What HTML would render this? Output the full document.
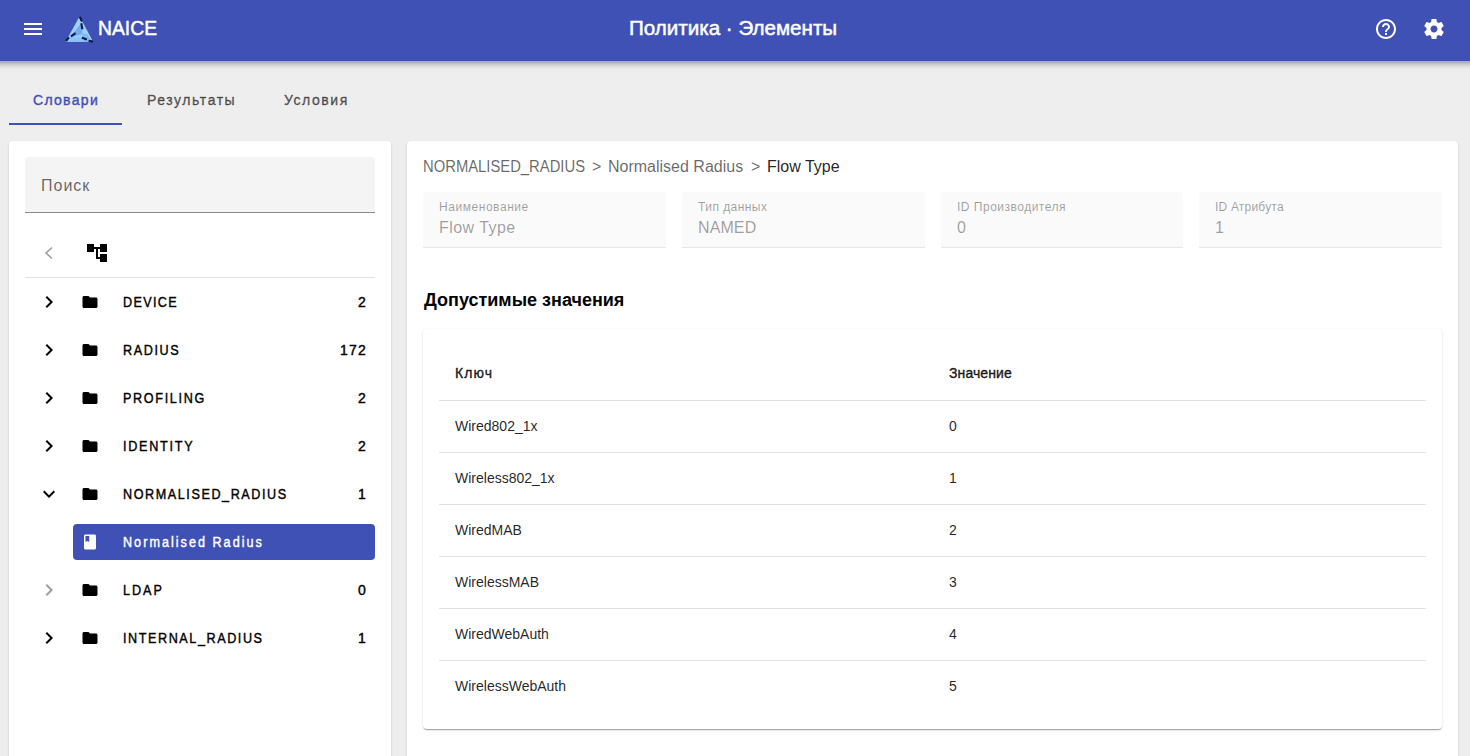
<!DOCTYPE html>
<html><head><meta charset="utf-8">
<style>
*{box-sizing:border-box;margin:0;padding:0}
html,body{width:1470px;height:756px;overflow:hidden;background:#eeeeee;font-family:"Liberation Sans",sans-serif;}
.abs{position:absolute;white-space:nowrap}
.hdr{position:absolute;left:0;top:0;width:1470px;height:61px;background:#3f51b5;z-index:5}
.hdrsh{position:absolute;left:-30px;top:0;width:1530px;height:61px;background:#3f51b5;box-shadow:0 2px 4px -1px rgba(0,0,0,.2),0 4px 5px 0 rgba(0,0,0,.14),0 1px 10px 0 rgba(0,0,0,.12);z-index:4}
.t{color:#fff;font-size:21px;font-weight:normal;-webkit-text-stroke:0.5px currentColor}
.tab{position:absolute;top:92px;font-size:14px;font-weight:normal;-webkit-text-stroke:0.4px currentColor;letter-spacing:1.3px;color:rgba(0,0,0,.6)}
.card{position:absolute;background:#fff;border-radius:4px;box-shadow:0 2px 1px -1px rgba(0,0,0,.2),0 1px 1px 0 rgba(0,0,0,.14),0 1px 3px 0 rgba(0,0,0,.12)}
.med{font-weight:normal;-webkit-text-stroke:0.4px currentColor}
.lbl{font-size:14px;font-weight:normal;-webkit-text-stroke:0.4px currentColor;color:#000;transform:scaleX(0.9);transform-origin:0 0}
.cnt{font-size:14px;font-weight:normal;-webkit-text-stroke:0.4px currentColor;color:#000;letter-spacing:1.2px}
.fld{position:absolute;top:192px;height:56px;background:#fafafa;border-radius:4px 4px 0 0;border-bottom:1px solid #e6e6e6}
.fl{font-size:12px;color:rgba(0,0,0,.38);letter-spacing:0.5px}
.fv{font-size:16px;color:rgba(0,0,0,.38)}
.bc{font-size:16px;color:rgba(0,0,0,.6)}
.hline{position:absolute;left:439px;width:987px;height:1px;background:#e0e0e0}
.cell{font-size:14px;color:rgba(0,0,0,.87)}
.th{font-size:14px;font-weight:normal;-webkit-text-stroke:0.4px currentColor;color:rgba(0,0,0,.87)}
</style></head><body>
<div class="hdrsh"></div>
<div class="hdr">
<svg class="abs" style="left:23px;top:22px" width="20" height="14" viewBox="0 0 20 14"><rect x="1" y="1" width="18" height="2" fill="#fff"/><rect x="1" y="6" width="18" height="2" fill="#fff"/><rect x="1" y="11" width="18" height="2" fill="#fff"/></svg>
<svg class="abs" style="left:62px;top:12px" width="36" height="34" viewBox="0 0 36 34">
<polygon points="17.6,4.3 31.1,29.7 3.6,29.7" fill="#9ccffb"/>
<polygon points="19.5,11 20.5,22 7,26 13,19" fill="#72abf0"/>
<polygon points="20.5,21.5 25,22 30,29.7 21,29.7 20,25" fill="#80b8f4"/>
<polygon points="9,25.5 20,25 20.5,29.7 6,29.7" fill="#8cc3f7"/>
<g stroke="#0a1a45" stroke-width="2.1" stroke-linecap="butt" fill="none">
<line x1="17.6" y1="4.6" x2="20" y2="9.5"/>
<line x1="19.3" y1="11.3" x2="20.4" y2="17.2"/>
<line x1="13.6" y1="21.2" x2="9" y2="24.4"/>
<line x1="6.9" y1="25.3" x2="4" y2="29"/>
<line x1="20" y1="25.7" x2="24.9" y2="27.6"/>
<line x1="26.6" y1="28.7" x2="31" y2="29.6"/>
</g>
</svg>
<div class="abs t" style="left:98px;top:16px;transform:scaleX(0.92);transform-origin:0 0">NAICE</div>
<div class="abs t" style="left:629px;top:16px;transform:scaleX(0.98);transform-origin:0 0">Политика · Элементы</div>
<svg class="abs" style="left:1374px;top:17px" width="24" height="24" viewBox="0 0 24 24"><path fill="#fff" d="M11 18h2v-2h-2v2zm1-16C6.48 2 2 6.48 2 12s4.48 10 10 10 10-4.48 10-10S17.52 2 12 2zm0 18c-4.41 0-8-3.59-8-8s3.59-8 8-8 8 3.59 8 8-3.59 8-8 8zm0-14c-2.21 0-4 1.790-4 4h2c0-1.1.9-2 2-2s2 .9 2 2c0 2-3 1.75-3 5h2c0-2.25 3-2.5 3-5 0-2.21-1.79-4-4-4z"/></svg>
<svg class="abs" style="left:1422px;top:17px" width="24" height="24" viewBox="0 0 24 24"><path fill="#fff" d="M19.43 12.98c.04-.32.07-.64.07-.98s-.03-.66-.07-.98l2.11-1.650c.19-.15.24-.42.12-.64l-2-3.46c-.12-.22-.39-.3-.61-.22l-2.49 1c-.52-.4-1.08-.73-1.69-.98l-.38-2.65C14.46 2.18 14.25 2 14 2h-4c-.25 0-.46.18-.49.42l-.38 2.65c-.61.25-1.17.59-1.69.98l-2.49-1c-.23-.09-.49 0-.61.22l-2 3.46c-.13.22-.07.49.12.64l2.11 1.65c-.04.32-.07.65-.07.98s.03.66.07.98l-2.11 1.65c-.19.15-.24.42-.12.64l2 3.46c.12.22.39.3.61.22l2.49-1c.52.4 1.08.73 1.69.98l.38 2.65c.03.24.24.42.49.42h4c.25 0 .46-.18.49-.42l.38-2.65c.61-.25 1.17-.59 1.690-.98l2.49 1c.23.09.49 0 .61-.22l2-3.46c.12-.22.07-.49-.12-.64l-2.11-1.65zM12 15.5c-1.93 0-3.5-1.57-3.5-3.5s1.57-3.5 3.5-3.5 3.5 1.57 3.5 3.5-1.57 3.5-3.5 3.5z"/></svg>
</div>
<div class="tab" style="left:33px;color:#3f51b5">Словари</div>
<div class="tab" style="left:147px;letter-spacing:1.55px">Результаты</div>
<div class="tab" style="left:284px;letter-spacing:1.55px">Условия</div>
<div class="abs" style="left:9px;top:123px;width:113px;height:2px;background:#3f51b5"></div>
<div class="card" style="left:9px;top:141px;width:382px;height:640px"></div>
<div class="abs" style="left:25px;top:157px;width:350px;height:56px;background:#f4f4f4;border-radius:4px 4px 0 0;border-bottom:1px solid #8a8a8a"></div>
<div class="abs" style="left:41px;top:177px;font-size:16px;letter-spacing:1px;color:rgba(0,0,0,.6)">Поиск</div>
<svg class="abs" style="left:44px;top:246px" width="10" height="14" viewBox="0 0 10 14"><path d="M8 1.5 L2 7 L8 12.5" stroke="#9e9e9e" stroke-width="1.6" fill="none"/></svg>
<svg class="abs" style="left:87px;top:244px" width="20" height="18" viewBox="0 0 20 18"><rect x="0" y="0" width="7" height="8" fill="#000"/><rect x="13" y="0" width="7" height="8" fill="#000"/><rect x="13" y="10" width="7" height="8" fill="#000"/><rect x="7" y="3" width="6" height="2" fill="#000"/><rect x="9" y="5" width="2" height="9" fill="#000"/><rect x="9" y="13" width="4" height="2" fill="#000"/></svg>
<div class="abs" style="left:25px;top:277px;width:350px;height:1px;background:#e0e0e0"></div>
<svg class="abs" style="left:37px;top:290px" width="24" height="24" viewBox="0 0 24 24"><path fill="#000" d="M10 6L8.59 7.41 13.17 12l-4.58 4.59L10 18l6-6z"/></svg>
<svg class="abs" style="left:81px;top:293px" width="18" height="18" viewBox="0 0 24 24"><path fill="#000" d="M10 4H4c-1.1 0-1.99.9-1.99 2L2 18c0 1.1.9 2 2 2h16c1.1 0 2-.9 2-2V8c0-1.1-.9-2-2-2h-8l-2-2z"/></svg>
<div class="abs lbl" style="left:123px;top:294px;letter-spacing:1.5px">DEVICE</div>
<div class="abs cnt" style="right:1103px;top:294px">2</div>
<svg class="abs" style="left:37px;top:338px" width="24" height="24" viewBox="0 0 24 24"><path fill="#000" d="M10 6L8.59 7.41 13.17 12l-4.58 4.59L10 18l6-6z"/></svg>
<svg class="abs" style="left:81px;top:341px" width="18" height="18" viewBox="0 0 24 24"><path fill="#000" d="M10 4H4c-1.1 0-1.99.9-1.99 2L2 18c0 1.1.9 2 2 2h16c1.1 0 2-.9 2-2V8c0-1.1-.9-2-2-2h-8l-2-2z"/></svg>
<div class="abs lbl" style="left:123px;top:342px;letter-spacing:1.8px">RADIUS</div>
<div class="abs cnt" style="right:1103px;top:342px">172</div>
<svg class="abs" style="left:37px;top:386px" width="24" height="24" viewBox="0 0 24 24"><path fill="#000" d="M10 6L8.59 7.41 13.17 12l-4.58 4.59L10 18l6-6z"/></svg>
<svg class="abs" style="left:81px;top:389px" width="18" height="18" viewBox="0 0 24 24"><path fill="#000" d="M10 4H4c-1.1 0-1.99.9-1.99 2L2 18c0 1.1.9 2 2 2h16c1.1 0 2-.9 2-2V8c0-1.1-.9-2-2-2h-8l-2-2z"/></svg>
<div class="abs lbl" style="left:123px;top:390px;letter-spacing:1.85px">PROFILING</div>
<div class="abs cnt" style="right:1103px;top:390px">2</div>
<svg class="abs" style="left:37px;top:434px" width="24" height="24" viewBox="0 0 24 24"><path fill="#000" d="M10 6L8.59 7.41 13.17 12l-4.58 4.59L10 18l6-6z"/></svg>
<svg class="abs" style="left:81px;top:437px" width="18" height="18" viewBox="0 0 24 24"><path fill="#000" d="M10 4H4c-1.1 0-1.99.9-1.99 2L2 18c0 1.1.9 2 2 2h16c1.1 0 2-.9 2-2V8c0-1.1-.9-2-2-2h-8l-2-2z"/></svg>
<div class="abs lbl" style="left:123px;top:438px;letter-spacing:1.95px">IDENTITY</div>
<div class="abs cnt" style="right:1103px;top:438px">2</div>
<svg class="abs" style="left:37px;top:482px" width="24" height="24" viewBox="0 0 24 24"><path fill="#000" d="M16.59 8.59L12 13.17 7.41 8.59 6 10l6 6 6-6z"/></svg>
<svg class="abs" style="left:81px;top:485px" width="18" height="18" viewBox="0 0 24 24"><path fill="#000" d="M10 4H4c-1.1 0-1.99.9-1.99 2L2 18c0 1.1.9 2 2 2h16c1.1 0 2-.9 2-2V8c0-1.1-.9-2-2-2h-8l-2-2z"/></svg>
<div class="abs lbl" style="left:123px;top:486px;letter-spacing:1.75px">NORMALISED_RADIUS</div>
<div class="abs cnt" style="right:1103px;top:486px">1</div>
<svg class="abs" style="left:37px;top:578px" width="24" height="24" viewBox="0 0 24 24"><path fill="rgba(0,0,0,.38)" d="M10 6L8.59 7.41 13.17 12l-4.58 4.59L10 18l6-6z"/></svg>
<svg class="abs" style="left:81px;top:581px" width="18" height="18" viewBox="0 0 24 24"><path fill="#000" d="M10 4H4c-1.1 0-1.99.9-1.99 2L2 18c0 1.1.9 2 2 2h16c1.1 0 2-.9 2-2V8c0-1.1-.9-2-2-2h-8l-2-2z"/></svg>
<div class="abs lbl" style="left:123px;top:582px;letter-spacing:2.2px">LDAP</div>
<div class="abs cnt" style="right:1103px;top:582px">0</div>
<svg class="abs" style="left:37px;top:626px" width="24" height="24" viewBox="0 0 24 24"><path fill="#000" d="M10 6L8.59 7.41 13.17 12l-4.58 4.59L10 18l6-6z"/></svg>
<svg class="abs" style="left:81px;top:629px" width="18" height="18" viewBox="0 0 24 24"><path fill="#000" d="M10 4H4c-1.1 0-1.99.9-1.99 2L2 18c0 1.1.9 2 2 2h16c1.1 0 2-.9 2-2V8c0-1.1-.9-2-2-2h-8l-2-2z"/></svg>
<div class="abs lbl" style="left:123px;top:630px;letter-spacing:1.75px">INTERNAL_RADIUS</div>
<div class="abs cnt" style="right:1103px;top:630px">1</div>
<div class="abs" style="left:73px;top:524px;width:302px;height:36px;background:#3f51b5;border-radius:4px"></div>
<svg class="abs" style="left:81px;top:533px" width="18" height="18" viewBox="0 0 24 24"><path fill="#fff" d="M18 2H6c-1.1 0-2 .9-2 2v16c0 1.1.9 2 2 2h12c1.1 0 2-.9 2-2V4c0-1.1-.9-2-2-2zM6 4h5v8l-2.5-1.5L6 12V4z"/></svg>
<div class="abs lbl" style="left:123px;top:534px;color:#fff;letter-spacing:2.25px">Normalised Radius</div>
<div class="card" style="left:407px;top:141px;width:1051px;height:640px"></div>
<div class="abs bc" style="left:423px;top:158px;transform:scaleX(0.925);transform-origin:0 0">NORMALISED_RADIUS</div>
<div class="abs bc" style="left:592px;top:158px">&gt;</div>
<div class="abs bc" style="left:608px;top:158px">Normalised Radius</div>
<div class="abs bc" style="left:751px;top:158px">&gt;</div>
<div class="abs bc" style="left:767px;top:158px;color:rgba(0,0,0,.87)">Flow Type</div>
<div class="fld" style="left:423px;width:243px"></div>
<div class="abs fl" style="left:439px;top:200px;letter-spacing:0.55px">Наименование</div>
<div class="abs fv" style="left:439px;top:219px;letter-spacing:0.45px">Flow Type</div>
<div class="fld" style="left:682px;width:243px"></div>
<div class="abs fl" style="left:698px;top:200px;letter-spacing:0.45px">Тип данных</div>
<div class="abs fv" style="left:698px;top:219px;letter-spacing:0.1px">NAMED</div>
<div class="fld" style="left:941px;width:242px"></div>
<div class="abs fl" style="left:957px;top:200px;letter-spacing:0.5px">ID Производителя</div>
<div class="abs fv" style="left:957px;top:219px;letter-spacing:0px">0</div>
<div class="fld" style="left:1199px;width:243px"></div>
<div class="abs fl" style="left:1215px;top:200px;letter-spacing:0.2px">ID Атрибута</div>
<div class="abs fv" style="left:1215px;top:219px;letter-spacing:0px">1</div>
<div class="abs" style="left:424px;top:290px;font-size:18px;font-weight:bold;color:#000">Допустимые значения</div>
<div class="card" style="left:423px;top:329px;width:1019px;height:400px;box-shadow:0 2px 1px -1px rgba(0,0,0,.2),0 1px 1px 0 rgba(0,0,0,.14),0 1px 3px 0 rgba(0,0,0,.12)"></div>
<div class="abs th" style="left:455px;top:365px;letter-spacing:1.05px">Ключ</div>
<div class="abs th" style="left:949px;top:365px;letter-spacing:0.1px">Значение</div>
<div class="hline" style="top:400px"></div>
<div class="abs cell" style="left:455px;top:418px">Wired802_1x</div>
<div class="abs cell" style="left:949px;top:418px">0</div>
<div class="hline" style="top:452px"></div>
<div class="abs cell" style="left:455px;top:470px">Wireless802_1x</div>
<div class="abs cell" style="left:949px;top:470px">1</div>
<div class="hline" style="top:504px"></div>
<div class="abs cell" style="left:455px;top:522px">WiredMAB</div>
<div class="abs cell" style="left:949px;top:522px">2</div>
<div class="hline" style="top:556px"></div>
<div class="abs cell" style="left:455px;top:574px">WirelessMAB</div>
<div class="abs cell" style="left:949px;top:574px">3</div>
<div class="hline" style="top:608px"></div>
<div class="abs cell" style="left:455px;top:626px">WiredWebAuth</div>
<div class="abs cell" style="left:949px;top:626px">4</div>
<div class="hline" style="top:660px"></div>
<div class="abs cell" style="left:455px;top:678px">WirelessWebAuth</div>
<div class="abs cell" style="left:949px;top:678px">5</div>
</body></html>
